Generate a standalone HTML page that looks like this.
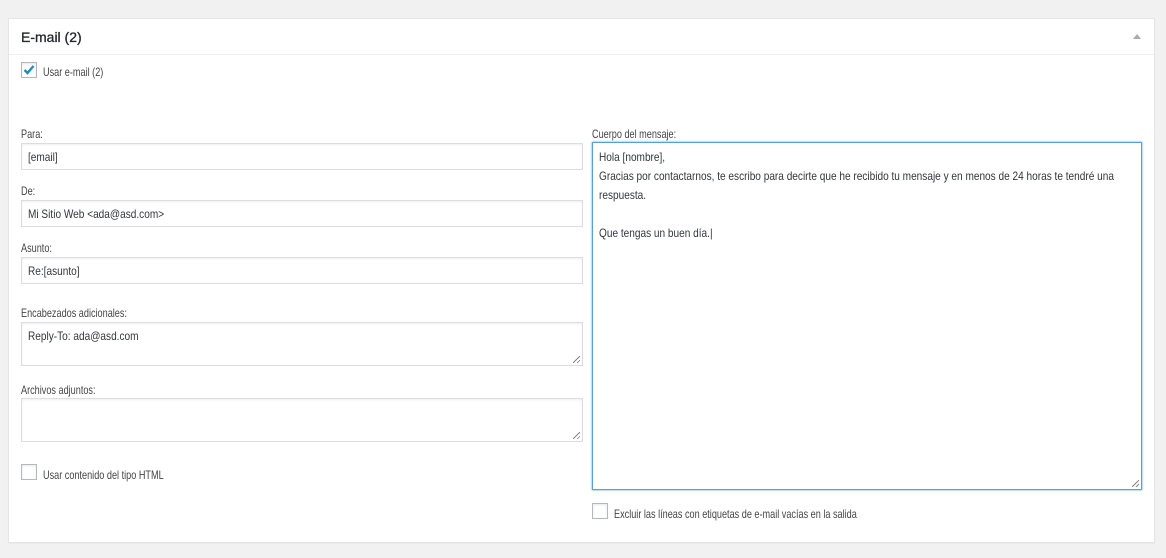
<!DOCTYPE html>
<html><head><style>
*{box-sizing:border-box;margin:0;padding:0}
body{width:1166px;height:558px;background:#f1f1f1;font-family:"Liberation Sans",sans-serif;color:#444;position:relative;overflow:hidden}
.panel{position:absolute;left:8px;top:18px;width:1147px;height:525px;background:#fff;border:1px solid #e5e5e5;box-shadow:0 1px 1px rgba(0,0,0,.04)}
.hd{position:absolute;left:0;top:0;right:0;height:36px;border-bottom:1px solid #eee}
.hd h2{position:absolute;left:12px;top:10px;font-size:14px;font-weight:normal;color:#23282d;-webkit-text-stroke:0.3px #23282d}
.arrow{position:absolute;right:13px;top:15px;width:0;height:0;border-left:4px solid transparent;border-right:4px solid transparent;border-bottom:5px solid #aaa}
.t{position:absolute;font-size:12px;color:#444;white-space:nowrap;transform:scaleX(.76);transform-origin:0 0}
.in{position:absolute;background:#fff;border:1px solid #ddd;box-shadow:inset 0 1px 2px rgba(0,0,0,.07);font-size:12px;color:#32373c;padding:6px 6px}
.s{display:inline-block;white-space:nowrap;transform:scaleX(.84);transform-origin:0 0}
.cb{position:absolute;width:16px;height:16px;border:1px solid #b4b9be;background:#fff;box-shadow:inset 0 1px 2px rgba(0,0,0,.1)}
.grip{position:absolute;right:2px;bottom:2px;width:7px;height:7px;background:linear-gradient(135deg,transparent 45%,#888 45%,#888 55%,transparent 55%,transparent 75%,#888 75%,#888 85%,transparent 85%)}
</style></head><body>
<div class="panel">
<div class="hd"><h2>E-mail (2)</h2><div class="arrow"></div></div>
</div>
<div class="cb" style="left:21px;top:62px"><svg width="16" height="16" viewBox="0 0 16 16" style="position:absolute;left:-1px;top:-1px"><path d="M3.5 8l3 3 6-7" stroke="#1e8cbe" stroke-width="2.4" fill="none"/></svg></div>
<div class="t" style="left:43px;top:65px">Usar e-mail (2)</div>

<div class="t" style="left:21px;top:127px">Para:</div>
<div class="in" style="left:21px;top:143px;width:562px;height:27px"><span class="s">[email]</span></div>
<div class="t" style="left:21px;top:184px">De:</div>
<div class="in" style="left:21px;top:200px;width:562px;height:27px"><span class="s">Mi Sitio Web &lt;ada@asd.com&gt;</span></div>
<div class="t" style="left:21px;top:241px">Asunto:</div>
<div class="in" style="left:21px;top:257px;width:562px;height:27px"><span class="s">Re:[asunto]</span></div>
<div class="t" style="left:21px;top:306px">Encabezados adicionales:</div>
<div class="in" style="left:21px;top:322px;width:562px;height:44px;padding-top:6px"><span class="s">Reply-To: ada@asd.com</span><div class="grip"></div></div>
<div class="t" style="left:21px;top:383px">Archivos adjuntos:</div>
<div class="in" style="left:21px;top:398px;width:562px;height:44px"><div class="grip"></div></div>
<div class="cb" style="left:21px;top:464px"></div>
<div class="t" style="left:43px;top:468px">Usar contenido del tipo HTML</div>

<div class="t" style="left:592px;top:127px">Cuerpo del mensaje:</div>
<div class="in" style="left:592px;top:142px;width:550px;height:348px;border-color:#5b9dd9;box-shadow:0 0 2px rgba(30,140,190,.8);line-height:19px;padding:5px 6px"><span class="s">Hola [nombre],<br>Gracias por contactarnos, te escribo para decirte que he recibido tu mensaje y en menos de 24 horas te tendré una<br>respuesta.<br><br>Que tengas un buen día.|</span><div class="grip"></div></div>
<div class="cb" style="left:592px;top:503px"></div>
<div class="t" style="left:614px;top:507px">Excluir las líneas con etiquetas de e-mail vacías en la salida</div>
</body></html>
